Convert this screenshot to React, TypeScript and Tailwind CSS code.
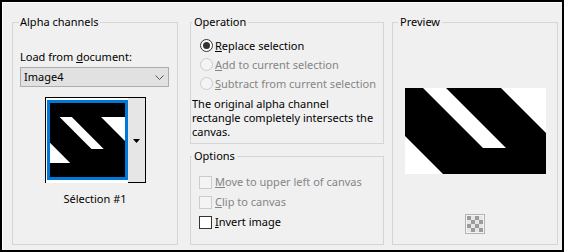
import React from 'react';

function StripeArt() {
  return (
    <svg viewBox="0 0 141 86" className="block w-full h-full" preserveAspectRatio="none">
      <rect x="0" y="0" width="141" height="86" fill="#000" />
      <polygon points="18,0 41,0 101,60 78,60" fill="#fff" />
      <polygon points="96,0 141,0 141,45" fill="#fff" />
      <polygon points="0,48 38,86 0,86" fill="#fff" />
    </svg>
  );
}

function Radio({ checked, disabled }: { checked?: boolean; disabled?: boolean }) {
  return (
    <span
      className={
        'flex w-[13px] h-[13px] shrink-0 items-center justify-center rounded-full border ' +
        (disabled ? 'border-[#cccccc] bg-[#f4f4f4]' : 'border-[#333333] bg-white')
      }
    >
      {checked && <span className="w-[7px] h-[7px] rounded-full bg-[#333333]" />}
    </span>
  );
}

function Check({ disabled }: { disabled?: boolean }) {
  return (
    <span
      className={
        'block w-[13px] h-[13px] shrink-0 border ' +
        (disabled ? 'border-[#cccccc] bg-[#f4f4f4]' : 'border-[#333333] bg-white')
      }
    />
  );
}

function Checker() {
  const cells = [];
  for (let r = 0; r < 4; r++) {
    for (let c = 0; c < 4; c++) {
      cells.push(
        <rect
          key={r + '-' + c}
          x={2 + c * 4}
          y={2 + r * 4}
          width="4"
          height="4"
          fill={(r + c) % 2 === 0 ? '#9c9c9c' : '#e6e6e6'}
        />
      );
    }
  }
  return (
    <svg width="20" height="20" viewBox="0 0 20 20" className="block">
      <rect x="0.5" y="0.5" width="19" height="19" fill="#f4f4f4" stroke="#b4b4b4" />
      {cells}
    </svg>
  );
}

export default function App() {
  return (
    <div className="w-[564px] h-[252px] bg-[#f0f0f0] border-2 border-black shadow-[inset_1px_1px_0_#ffffff] text-[11px] leading-[16px] text-black font-['Noto_Sans',sans-serif] overflow-hidden">
      <div className="flex pt-[12px] pl-[10px]">
        {/* Alpha channels */}
        <fieldset className="w-[166px] h-[231px] border border-[#d5d5d5] px-[7px]">
          <legend className="ml-[-1px] px-[1px]">Alpha channels</legend>
          <div className="mt-[19px]">
            Load from <span className="underline">d</span>ocument:
          </div>
          <div className="mt-[2px] flex h-[20px] w-[149px] items-center justify-between border border-[#adadad] bg-[#e1e1e1] pl-[3px] pr-[4px]">
            <span>Image4</span>
            <svg width="9" height="5" viewBox="0 0 9 5" className="block">
              <path d="M0.5 0.5 L4.5 4.5 L8.5 0.5" fill="none" stroke="#555" />
            </svg>
          </div>
          <div className="mt-[10px] mx-auto flex h-[86px] w-[101px] border-t border-l border-black bg-white">
            <div className="pl-[1px] pt-[2px]">
              <div className="flex h-[80px] w-[81px] items-center border-[3px] border-[#0078d7] bg-black">
                <div className="h-[46px] w-[75px]">
                  <StripeArt />
                </div>
              </div>
            </div>
            <div className="flex flex-1 justify-center border-r border-b border-black bg-[#e6e6e6] pt-[41px]">
              <svg width="7" height="4" viewBox="0 0 7 4" className="block">
                <polygon points="0,0 7,0 3.5,4" fill="#000" />
              </svg>
            </div>
          </div>
          <div className="mt-[8px] text-center">Sélection #1</div>
        </fieldset>

        {/* Middle column */}
        <div className="ml-[12px] flex w-[194px] flex-col">
          <fieldset className="h-[130px] border border-[#d5d5d5]">
            <legend className="ml-[1px] px-[2px]">Operation</legend>
            <div className="mt-[6px] ml-[9px]">
              <div className="flex h-[19px] items-center gap-[2px]">
                <Radio checked />
                <span>
                  <span className="underline">R</span>eplace selection
                </span>
              </div>
              <div className="flex h-[19px] items-center gap-[2px] text-[#858585]">
                <Radio disabled />
                <span>
                  <span className="underline">A</span>dd to current selection
                </span>
              </div>
              <div className="flex h-[19px] items-center gap-[2px] text-[#858585]">
                <Radio disabled />
                <span>
                  <span className="underline">S</span>ubtract from current selection
                </span>
              </div>
            </div>
            <p className="mt-[4px] ml-[1px] leading-[14px]">
              The original alpha channel
              <br />
              rectangle completely intersects the
              <br />
              canvas.
            </p>
          </fieldset>
          <fieldset className="mt-[4px] h-[97px] border border-[#d5d5d5]">
            <legend className="ml-[1px] px-[2px]">Options</legend>
            <div className="mt-[8px] ml-[8px]">
              <div className="flex h-[20px] items-center gap-[3px] text-[#858585]">
                <Check disabled />
                <span>
                  <span className="underline">M</span>ove to upper left of canvas
                </span>
              </div>
              <div className="flex h-[20px] items-center gap-[3px] text-[#858585]">
                <Check disabled />
                <span>
                  <span className="underline">C</span>lip to canvas
                </span>
              </div>
              <div className="flex h-[20px] items-center gap-[3px]">
                <Check />
                <span>
                  <span className="underline">I</span>nvert image
                </span>
              </div>
            </div>
          </fieldset>
        </div>

        {/* Preview */}
        <fieldset className="ml-[8px] w-[166px] h-[231px] border border-[#d5d5d5]">
          <legend className="ml-[5px] px-[2px]">Preview</legend>
          <div className="mt-[58px] mx-auto h-[86px] w-[141px]">
            <StripeArt />
          </div>
          <div className="mt-[40px] flex justify-center">
            <Checker />
          </div>
        </fieldset>
      </div>
    </div>
  );
}
